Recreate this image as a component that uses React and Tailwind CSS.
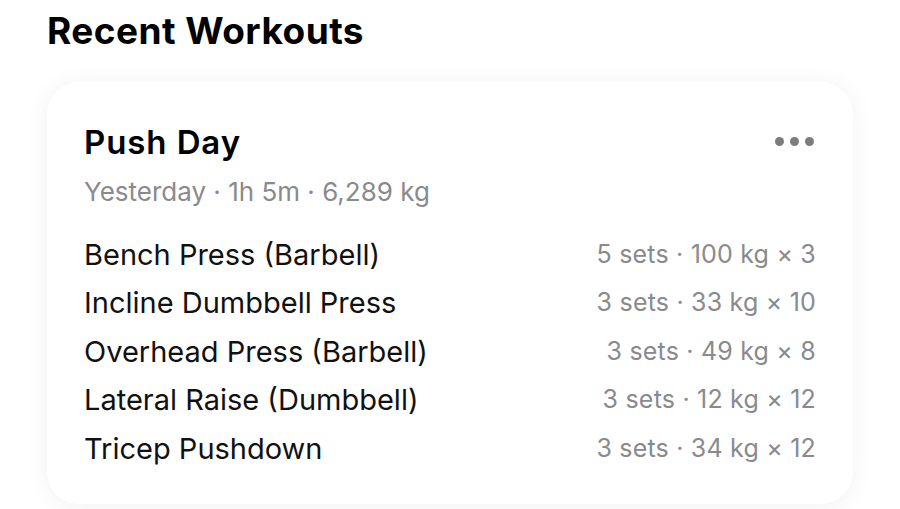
import React from "react";

const exercises = [
  { name: "Bench Press (Barbell)", detail: "5 sets · 100 kg × 3" },
  { name: "Incline Dumbbell Press", detail: "3 sets · 33 kg × 10" },
  { name: "Overhead Press (Barbell)", detail: "3 sets · 49 kg × 8" },
  { name: "Lateral Raise (Dumbbell)", detail: "3 sets · 12 kg × 12" },
  { name: "Tricep Pushdown", detail: "3 sets · 34 kg × 12" },
];

export default function App() {
  return (
    <div className="min-h-screen w-full bg-white text-black" style={{ fontFamily: "Inter, 'Noto Sans', sans-serif" }}>
      <div className="px-[47px] pt-[7px]">
        <h1 className="text-[37px] font-bold leading-[48px] tracking-[0.45px]">Recent Workouts</h1>
        <div className="mt-[27px] rounded-[32px] bg-white px-[37px] pt-[40px] pb-[31px] shadow-[0_2px_24px_rgba(0,0,0,0.06)]">
          <div className="flex items-start justify-between">
            <div>
              <h2 className="text-[33px] font-semibold leading-[40px] tracking-[0.9px]">Push Day</h2>
              <p className="mt-[14px] text-[26px] leading-[32px] text-[#8a8a8e]">Yesterday · 1h 5m · 6,289 kg</p>
            </div>
            <div className="mt-[15px] flex gap-[6px] pr-[2px]">
              <span className="h-[9px] w-[9px] rounded-full bg-[#7c7c80]" />
              <span className="h-[9px] w-[9px] rounded-full bg-[#7c7c80]" />
              <span className="h-[9px] w-[9px] rounded-full bg-[#7c7c80]" />
            </div>
          </div>
          <div className="mt-[22px] flex flex-col">
            {exercises.map((ex) => (
              <div key={ex.name} className="flex h-[48.5px] items-center justify-between">
                <span className="text-[29px] text-[#111]">{ex.name}</span>
                <span className="text-[25px] tracking-[0.2px] text-[#8a8a8e]">{ex.detail}</span>
              </div>
            ))}
          </div>
        </div>
      </div>
    </div>
  );
}
